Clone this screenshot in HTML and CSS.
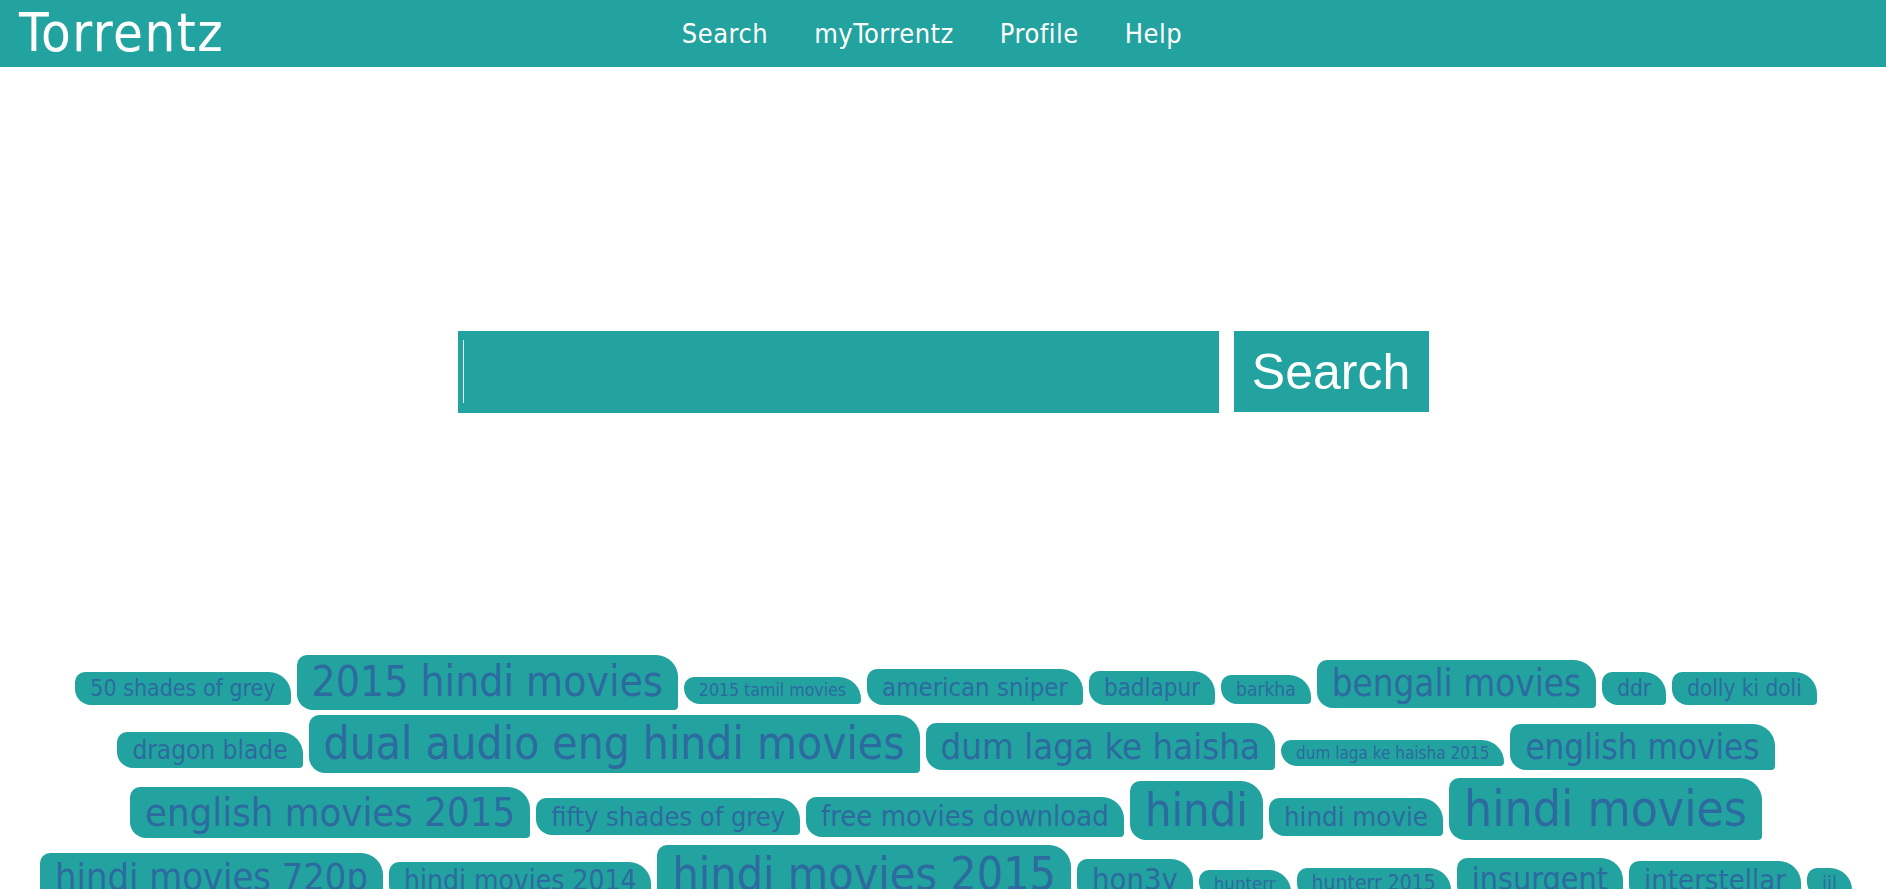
FILE: index.html
```html
<!DOCTYPE html>
<html lang="en">
<head>
<meta charset="utf-8">
<title>Torrentz</title>
<link rel="stylesheet" href="styles.css">
</head>
<body>
<header class="topbar">
  <div class="logo">Torrentz</div>
  <nav class="nav">
    <a href="#">Search</a>
    <a href="#">myTorrentz</a>
    <a href="#">Profile</a>
    <a href="#">Help</a>
  </nav>
  <div class="spacer"></div>
</header>

<main class="main">
  <form class="search">
    <div class="field"><input class="query" type="text" aria-label="Search"></div>
    <button class="go" type="button">Search</button>
  </form>

  <div class="cloud">
    <a class="tag" style="font-size:23px">50 shades of grey</a>
    <a class="tag" style="font-size:42.3px">2015 hindi movies</a>
    <a class="tag" style="font-size:17.6px">2015 tamil movies</a>
    <a class="tag" style="font-size:25.5px">american sniper</a>
    <a class="tag" style="font-size:24px">badlapur</a>
    <a class="tag" style="font-size:19px">barkha</a>
    <a class="tag" style="font-size:36.5px">bengali movies</a>
    <a class="tag" style="font-size:22.5px">ddr</a>
    <a class="tag" style="font-size:22.4px">dolly ki doli</a>
    <a class="tag" style="font-size:26px">dragon blade</a>
    <a class="tag" style="font-size:45.7px">dual audio eng hindi movies</a>
    <a class="tag" style="font-size:36.3px">dum laga ke haisha</a>
    <a class="tag" style="font-size:17px">dum laga ke haisha 2015</a>
    <a class="tag" style="font-size:34.7px">english movies</a>
    <a class="tag" style="font-size:39.7px">english movies 2015</a>
    <a class="tag" style="font-size:27px">fifty shades of grey</a>
    <a class="tag" style="font-size:29px">free movies download</a>
    <a class="tag" style="font-size:46.6px">hindi</a>
    <a class="tag" style="font-size:27.4px">hindi movie</a>
    <a class="tag" style="font-size:49.4px">hindi movies</a>
    <a class="tag" style="font-size:37.7px">hindi movies 720p</a>
    <a class="tag" style="font-size:28px">hindi movies 2014</a>
    <a class="tag" style="font-size:46.2px">hindi movies 2015</a>
    <a class="tag" style="font-size:30.7px">hon3y</a>
    <a class="tag" style="font-size:18.5px">hunterr</a>
    <a class="tag" style="font-size:21px">hunterr 2015</a>
    <a class="tag" style="font-size:32px">insurgent</a>
    <a class="tag" style="font-size:29px">interstellar</a>
    <a class="tag" style="font-size:20px">jil</a>
    <a class="tag" style="font-size:30px">jurassic world</a>
    <a class="tag" style="font-size:24px">kick 2014</a>
    <a class="tag" style="font-size:40px">malayalam movies</a>
    <a class="tag" style="font-size:22px">mad max</a>
  </div>
</main>
</body>
</html>
```

FILE: styles.css
```css
html, body {
  margin: 0;
  padding: 0;
  background: #ffffff;
}

body {
  font-family: "DejaVu Sans Condensed", "DejaVu Sans", sans-serif;
  font-stretch: condensed;
}

.topbar {
  height: 67px;
  background: #22a39f;
  display: grid;
  grid-template-columns: 1fr auto 1fr;
  align-items: center;
}

.logo {
  color: #ffffff;
  font-size: 54px;
  letter-spacing: 1.5px;
  line-height: normal;
  padding-left: 19px;
  margin-top: -2px;
}

.nav {
  display: flex;
  gap: 46px;
  padding-right: 22px;
}

.nav a {
  color: #ffffff;
  text-decoration: none;
  font-size: 27px;
  letter-spacing: 0.5px;
  line-height: normal;
}

.main {
  padding: 0 30px;
}

.search {
  display: flex;
  justify-content: center;
  gap: 15px;
  margin-top: 264px;
}

.field {
  position: relative;
  width: 761px;
  height: 82px;
}

.field::after {
  content: "";
  position: absolute;
  left: 5px;
  top: 9px;
  width: 1px;
  height: 63px;
  background: #e8f7f6;
}

.query {
  display: block;
  box-sizing: border-box;
  width: 100%;
  height: 100%;
  border: none;
  outline: none;
  background: #22a39f;
  color: #ffffff;
  font-size: 50px;
  padding: 0 6px;
}

.go {
  box-sizing: border-box;
  height: 81px;
  width: 195px;
  border: none;
  background: #22a39f;
  color: #ffffff;
  font-family: "Liberation Sans", Arial, sans-serif;
  font-stretch: normal;
  font-size: 50px;
  padding: 0 17px;
  cursor: pointer;
}

.cloud {
  display: flex;
  flex-wrap: wrap;
  justify-content: center;
  align-items: baseline;
  row-gap: 5px;
  margin-top: 242px;
}

.tag {
  display: inline-block;
  margin-left: 6px;
  padding: 4px 15px;
  background: #22a39f;
  color: #2d6a9f;
  line-height: 1.1;
  border-radius: 10px 22px 4px 16px;
  text-decoration: none;
  white-space: nowrap;
}
```
